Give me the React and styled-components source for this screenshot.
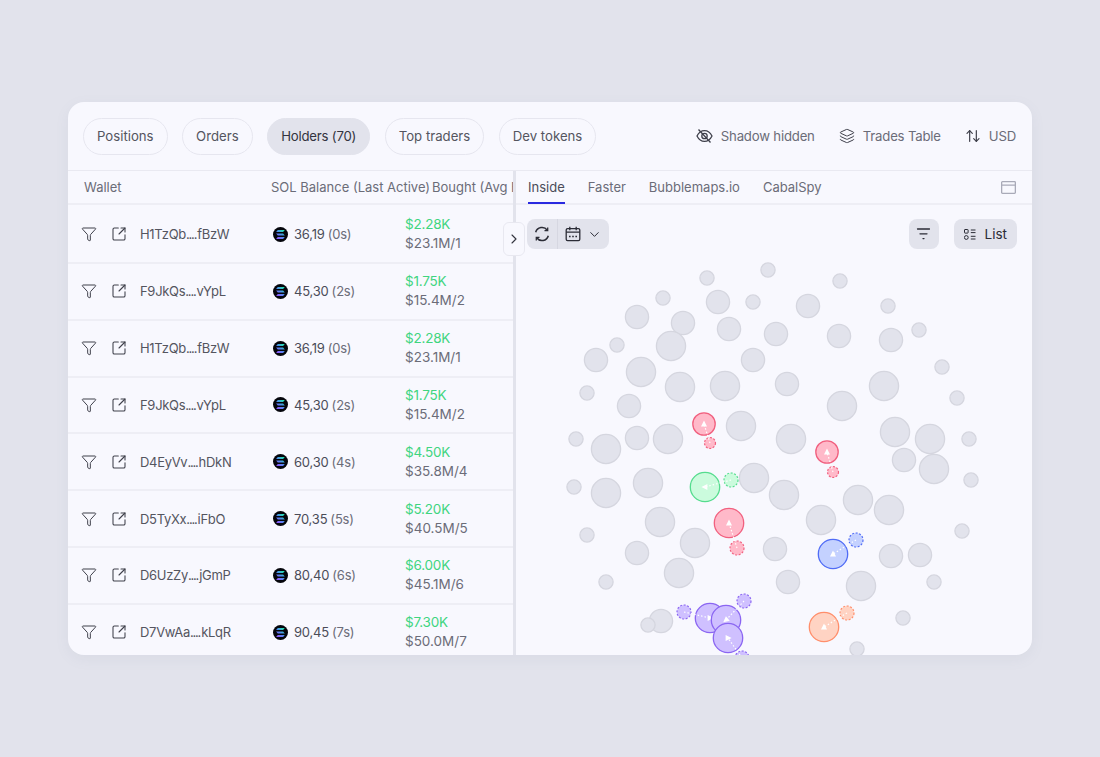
import React from 'react'
import styled, { createGlobalStyle } from 'styled-components'
import { Funnel, SquareArrowOutUpRight, Layers, ArrowUpDown, ChevronDown, ChevronRight } from 'lucide-react'

const GlobalStyle = createGlobalStyle`
  body {
    margin: 0;
    background: #e2e3ec;
    font-family: Inter, "Noto Sans", sans-serif;
    color: #4b4c58;
  }
`

const tabs = ['Positions', 'Orders', 'Holders (70)', 'Top traders', 'Dev tokens']
const subTabs = ['Inside', 'Faster', 'Bubblemaps.io', 'CabalSpy']

const holders = [
  { head: 'H1TzQb', tail: 'fBzW', sol: '36,19', age: '(0s)', bought: '$2.28K', avg: '$23.1M/1' },
  { head: 'F9JkQs', tail: 'vYpL', sol: '45,30', age: '(2s)', bought: '$1.75K', avg: '$15.4M/2' },
  { head: 'H1TzQb', tail: 'fBzW', sol: '36,19', age: '(0s)', bought: '$2.28K', avg: '$23.1M/1' },
  { head: 'F9JkQs', tail: 'vYpL', sol: '45,30', age: '(2s)', bought: '$1.75K', avg: '$15.4M/2' },
  { head: 'D4EyVv', tail: 'hDkN', sol: '60,30', age: '(4s)', bought: '$4.50K', avg: '$35.8M/4' },
  { head: 'D5TyXx', tail: 'iFbO', sol: '70,35', age: '(5s)', bought: '$5.20K', avg: '$40.5M/5' },
  { head: 'D6UzZy', tail: 'jGmP', sol: '80,40', age: '(6s)', bought: '$6.00K', avg: '$45.1M/6' },
  { head: 'D7VwAa', tail: 'kLqR', sol: '90,45', age: '(7s)', bought: '$7.30K', avg: '$50.0M/7' }
]

// [cx, cy, diameter]
const greyBubbles = [
  [707, 278, 15], [663, 298, 15], [718, 302, 24], [753, 302, 15], [768, 270, 15], [637, 317, 24],
  [683, 323, 24], [729, 329, 24], [776, 334, 24], [617, 345, 15], [671, 346, 30], [753, 360, 24],
  [596, 360, 24], [641, 372, 30], [680, 387, 30], [725, 386, 30], [587, 393, 15], [629, 406, 24],
  [576, 439, 15], [606, 449, 30], [637, 438, 24], [668, 439, 30], [741, 426, 30], [840, 281, 15],
  [808, 306, 24], [888, 306, 15], [839, 336, 24], [891, 340, 24], [919, 330, 15], [942, 367, 15],
  [787, 384, 24], [884, 386, 30], [957, 398, 15], [842, 406, 30], [791, 439, 30], [895, 432, 30],
  [930, 439, 30], [969, 439, 15], [904, 460, 24], [934, 469, 30], [971, 480, 15], [574, 487, 15],
  [606, 493, 30], [648, 483, 30], [754, 478, 30], [784, 495, 30], [660, 522, 30], [695, 543, 30],
  [587, 535, 15], [637, 553, 24], [679, 573, 30], [606, 582, 15], [775, 549, 24], [858, 500, 30],
  [889, 510, 30], [821, 520, 30], [891, 556, 24], [920, 555, 24], [962, 531, 15], [788, 582, 24],
  [861, 586, 30], [934, 582, 15], [903, 618, 15], [857, 649, 15], [661, 621, 24], [648, 625, 15]
]

const tones = {
  pink: { fill: '#ffb9c9', stroke: '#f1607f' },
  green: { fill: '#cbfbdd', stroke: '#55dc8e' },
  blue: { fill: '#c4d1ff', stroke: '#506cf6' },
  purple: { fill: '#cfc0ff', stroke: '#8b66f2' },
  orange: { fill: '#ffd3c3', stroke: '#ff8e6b' }
}

// big bubble, its dashed satellite and the direction the arrow head points to
const clusters = [
  { tone: 'pink', big: [704, 424, 23], small: [710, 443, 12], head: -90 },
  { tone: 'pink', big: [827, 452, 23], small: [833, 472, 12], head: -90 },
  { tone: 'green', big: [705, 487, 30], small: [731, 480, 15], head: 180 },
  { tone: 'pink', big: [729, 523, 30], small: [737, 548, 15], head: -90 },
  { tone: 'blue', big: [833, 554, 30], small: [856, 540, 15], head: -90 },
  { tone: 'orange', big: [824, 627, 30], small: [847, 613, 15], head: -90 },
  { tone: 'purple', big: [710, 618, 30], small: [684, 612, 15], head: 0 },
  { tone: 'purple', big: [726, 620, 30], small: [744, 601, 15], head: 140 },
  { tone: 'purple', big: [728, 638, 30], small: [742, 658, 15], head: 0 }
]

const Page = styled.div`
  min-height: 100vh;
  display: flex;
  align-items: center;
  justify-content: center;
`

const Card = styled.div`
  width: 964px;
  height: 553px;
  background: #f8f8fe;
  border-radius: 16px;
  overflow: hidden;
  display: flex;
  flex-direction: column;
  box-shadow: 0 4px 14px rgba(120, 122, 150, .08);
`

const TopBar = styled.div`
  height: 69px;
  box-sizing: border-box;
  flex: none;
  display: flex;
  align-items: center;
  justify-content: space-between;
  padding: 0 16px 0 15px;
  border-bottom: 1px solid #e9e9f1;
`

const Chips = styled.div`
  display: flex;
  gap: 14.5px;
`

const Chip = styled.div`
  height: 37px;
  box-sizing: border-box;
  padding: 0 13px;
  display: flex;
  align-items: center;
  border-radius: 19px;
  font-size: 13.2px;
  letter-spacing: ${p => (p.$active ? '-.2px' : '0')};
  border: 1px solid ${p => (p.$active ? '#e2e3ec' : '#e6e6ef')};
  background: ${p => (p.$active ? '#e2e3ec' : 'transparent')};
  color: ${p => (p.$active ? '#33343f' : '#54555f')};
`

const Options = styled.div`
  display: flex;
  gap: 24px;
`

const Option = styled.div`
  display: flex;
  align-items: center;
  gap: 8px;
  font-size: 13.2px;
  letter-spacing: -.2px;
  color: #6b6c78;
  svg { color: #3f404b; }
`

const Body = styled.div`
  flex: 1;
  min-height: 0;
  display: flex;
  position: relative;
`

const Table = styled.div`
  width: 445px;
  flex: none;
  overflow: hidden;
`

const Row = styled.div`
  display: grid;
  grid-template-columns: 203px 134px 200px;
  align-items: center;
  white-space: nowrap;
`

const HeadRow = styled(Row)`
  height: 32px;
  font-size: 13px;
  color: #6b6c78;
  border-bottom: 2px solid #eeeef5;
  padding: 0 0 0 16px;
  margin-bottom: 2px;
  grid-template-columns: 187px 161px 200px;
`

const HolderRow = styled(Row)`
  height: 54.85px;
  border-bottom: 2px solid #eeeef5;
  font-size: 13.5px;
`

const WalletCell = styled.div`
  display: flex;
  align-items: center;
  padding-left: 13px;
  font-size: 13px;
  color: #54555f;
  svg { flex: none; color: #3f404b; }
`

const WalletLink = styled.span`
  display: flex;
  margin: 0 13px 0 14px;
`

const Dots = styled.span`
  letter-spacing: -1.2px;
  margin-right: 1px;
`

const Address = styled.span`
  letter-spacing: -.3px;
`

const SolCell = styled.div`
  display: flex;
  align-items: center;
  gap: 6px;
  padding-left: 2px;
  font-size: 13px;
  letter-spacing: -.2px;
  color: #4b4c58;
`

const Age = styled.span`
  color: #6b6c78;
  margin-left: 3px;
`

const BoughtCell = styled.div`
  display: flex;
  flex-direction: column;
  gap: 2px;
  color: #6b6c78;
  line-height: 17px;
`

const Amount = styled.span`
  color: #40d57f;
  letter-spacing: -.2px;
`

const Divider = styled.div`
  width: 3px;
  flex: none;
  background: #e2e3ec;
`

const Expand = styled.div`
  position: absolute;
  left: 435px;
  top: 51px;
  width: 22px;
  height: 34px;
  box-sizing: border-box;
  display: flex;
  align-items: center;
  justify-content: center;
  background: #f8f8fe;
  border: 1px solid #e8e8f0;
  border-radius: 6px;
  color: #33343f;
`

const MapPanel = styled.div`
  flex: 1;
  min-width: 0;
  display: flex;
  flex-direction: column;
`

const SubTabs = styled.div`
  height: 32px;
  flex: none;
  display: flex;
  align-items: stretch;
  gap: 23px;
  padding: 0 16px 0 12px;
  border-bottom: 2px solid #eeeef5;
`

const SubTab = styled.div`
  display: flex;
  align-items: center;
  font-size: 13px;
  color: ${p => (p.$active ? '#4b4c58' : '#6b6c78')};
  margin-bottom: -1px;
  border-bottom: 2px solid ${p => (p.$active ? '#2a2ae0' : 'transparent')};
`

const PanelToggle = styled.div`
  margin-left: auto;
  display: flex;
  align-items: center;
  color: #a9aab8;
`

const Toolbar = styled.div`
  flex: none;
  display: flex;
  justify-content: space-between;
  padding: 14px 15px 7px 11px;
`

const Group = styled.div`
  height: 30px;
  display: flex;
  border-radius: 8px;
  background: #e2e3ec;
  color: #2b2c36;
`

const GroupButton = styled.div`
  display: flex;
  align-items: center;
  justify-content: center;
  gap: 6px;
  padding: 0 ${p => p.$pad}px;
  & + & { border-left: 1px solid #d6d7e1; }
`

const ToolActions = styled.div`
  display: flex;
  gap: 15px;
`

const ListLabel = styled.span`
  font-size: 13.5px;
  margin-left: 3px;
`

const MapSvg = styled.svg`
  display: block;
  flex: none;
`

const SolanaIcon = () => (
  <svg width='15' height='15' viewBox='0 0 15 15' style={{ flex: 'none' }}>
    <defs>
      <linearGradient id='sol' x1='0' y1='1' x2='1' y2='0'>
        <stop offset='0' stopColor='#a04cff' />
        <stop offset='.5' stopColor='#4f8df0' />
        <stop offset='1' stopColor='#18f5a0' />
      </linearGradient>
    </defs>
    <circle cx='7.5' cy='7.5' r='7.5' fill='#05060c' />
    <path d='M4.8 3.1h7l-1.7 2h-7zM3.1 6.5h7l1.7 2h-7zM4.8 9.9h7l-1.7 2h-7z' fill='url(#sol)' />
  </svg>
)

const ShadowIcon = () => (
  <svg width='17' height='16' viewBox='0 0 17 16' fill='none' stroke='currentColor' strokeWidth='1.3'>
    <path d='M1 8c1.8-3.6 4.3-5.4 7.5-5.4S14.200 4.400 16 8c-1.800 3.600-4.300 5.400-7.500 5.400S2.800 11.600 1 8z' />
    <circle cx='8.500' cy='8' r='2.700' />
    <path d='M2.500 1.500l12 13' />
  </svg>
)

const PanelIcon = () => (
  <svg width='15' height='13' viewBox='0 0 15 13' fill='none' stroke='currentColor' strokeWidth='1.3'>
    <rect x='.65' y='.65' width='13.7' height='11.7' rx='.8' />
    <path d='M.65 4.2h13.7' />
  </svg>
)

const ListIcon = () => (
  <svg width='12' height='11' viewBox='0 0 12 11' fill='none' stroke='currentColor' strokeWidth='1'>
    <rect x='.5' y='.5' width='3.6' height='3.6' rx='.5' />
    <circle cx='2.300' cy='8.500' r='1.900' />
    <path d='M6.800 1h4.700M6.800 3.600h4.700M6.800 7.300h4.700M6.800 10h4.700' />
  </svg>
)

const SortIcon = () => (
  <svg width='15' height='12' viewBox='0 0 15 12' fill='none' stroke='currentColor' strokeWidth='1.3' strokeLinecap='round'>
    <path d='M1.500 1h12M4 5.800h7M7 10.600h1' />
  </svg>
)

const SyncIcon = () => (
  <svg width='16' height='16' viewBox='0 0 16 16' fill='none' stroke='currentColor' strokeWidth='1.5'>
    <path d='M13.300 4.200A6.500 6.500 0 0 0 1.700 6.300' />
    <path d='M2.700 11.800a6.500 6.500 0 0 0 11.600-2.100' />
    <path d='M13.700 1.400v3.200h-3.200M2.300 14.600v-3.200h3.200' strokeWidth='1.300' />
  </svg>
)

const CalendarIcon = () => (
  <svg width='16' height='16' viewBox='0 0 16 16' fill='none' stroke='currentColor' strokeWidth='1.3'>
    <rect x='1.2' y='2.6' width='13.6' height='12' rx='1.4' />
    <path d='M1.2 6.2h13.6M4.8 .8v3.4M11.2 .8v3.4' />
    <path d='M4 10.400h1.600M7.200 10.400h1.600M10.400 10.400h1.600' strokeWidth='1.5' />
  </svg>
)

const Cluster = ({ tone, big, small, head }) => {
  const { fill, stroke } = tones[tone]
  return (
    <g>
      <circle cx={small[0]} cy={small[1]} r={small[2] / 2 - 0.5} fill={fill} stroke={stroke} strokeWidth='1.2' strokeDasharray='2 1.6' />
      <circle cx={big[0]} cy={big[1]} r={big[2] / 2 - 0.3} fill={fill} stroke={stroke} strokeWidth='1.3' />
      <line x1={small[0]} y1={small[1]} x2={big[0]} y2={big[1]} stroke='#fff' strokeWidth='1.2' strokeDasharray='1.5 2' />
      <polygon points='3.600,0 -2.400,3 -2.400,-3' fill='#fff' transform={`translate(${big[0]} ${big[1]}) rotate(${head})`} />
    </g>
  )
}

const BubbleMap = () => (
  <MapSvg width='516' height='399' viewBox='516 256 516 399'>
    {greyBubbles.map(([x, y, d], i) => (
      <circle key={i} cx={x} cy={y} r={d / 2 - 0.4} fill='#e2e3ec' stroke='#d5d6df' strokeWidth='1.3' />
    ))}
    {clusters.map((c, i) => <Cluster key={i} {...c} />)}
  </MapSvg>
)

const App = () => (
  <Page>
    <GlobalStyle />
    <Card>
      <TopBar>
        <Chips>
          {tabs.map(t => <Chip key={t} $active={t.startsWith('Holders')}>{t}</Chip>)}
        </Chips>
        <Options>
          <Option><ShadowIcon />Shadow hidden</Option>
          <Option><Layers size={16} strokeWidth={1.5} />Trades Table</Option>
          <Option><ArrowUpDown size={16} strokeWidth={1.8} />USD</Option>
        </Options>
      </TopBar>
      <Body>
        <Table>
          <HeadRow>
            <span>Wallet</span>
            <span>SOL Balance (Last Active)</span>
            <span>Bought (Avg B</span>
          </HeadRow>
          {holders.map((h, i) => (
            <HolderRow key={i}>
              <WalletCell>
                <Funnel size={16} strokeWidth={1.5} />
                <WalletLink><SquareArrowOutUpRight size={16} strokeWidth={1.6} /></WalletLink>
                <Address>{h.head}<Dots>....</Dots>{h.tail}</Address>
              </WalletCell>
              <SolCell><SolanaIcon /><span>{h.sol}<Age>{h.age}</Age></span></SolCell>
              <BoughtCell><Amount>{h.bought}</Amount>{h.avg}</BoughtCell>
            </HolderRow>
          ))}
        </Table>
        <Divider />
        <MapPanel>
          <SubTabs>
            {subTabs.map(t => <SubTab key={t} $active={t === 'Inside'}>{t}</SubTab>)}
            <PanelToggle><PanelIcon /></PanelToggle>
          </SubTabs>
          <Toolbar>
            <Group>
              <GroupButton $pad={7}><SyncIcon /></GroupButton>
              <GroupButton $pad={7}><CalendarIcon /><ChevronDown size={15} strokeWidth={1.6} /></GroupButton>
            </Group>
            <ToolActions>
              <Group><GroupButton $pad={7.5}><SortIcon /></GroupButton></Group>
              <Group><GroupButton $pad={10}><ListIcon /><ListLabel>List</ListLabel></GroupButton></Group>
            </ToolActions>
          </Toolbar>
          <BubbleMap />
        </MapPanel>
        <Expand><ChevronRight size={16} strokeWidth={1.7} /></Expand>
      </Body>
    </Card>
  </Page>
)

export default App
